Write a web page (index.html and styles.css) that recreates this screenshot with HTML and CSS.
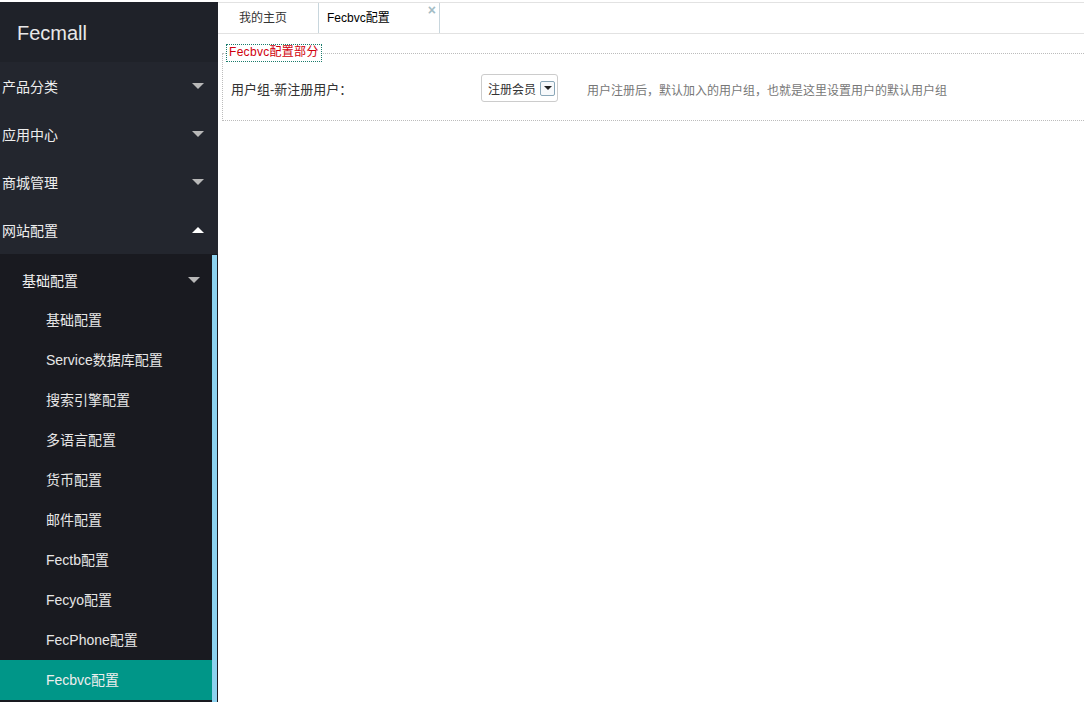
FILE: index.html
```
<!DOCTYPE html>
<html>
<head>
<meta charset="utf-8">
<link rel="stylesheet" href="styles.css">
</head>
<body>
<div class="app">
  <aside class="sidebar">
    <div class="logo">Fecmall</div>
    <div class="menu-item"><span>产品分类</span><i class="tri down"></i></div>
    <div class="menu-item"><span>应用中心</span><i class="tri down"></i></div>
    <div class="menu-item"><span>商城管理</span><i class="tri down"></i></div>
    <div class="menu-item"><span>网站配置</span><i class="tri up"></i></div>
    <div class="submenu">
      <div class="sub-head"><span>基础配置</span><i class="tri down"></i></div>
      <div class="sub-item">基础配置</div>
      <div class="sub-item">Service数据库配置</div>
      <div class="sub-item">搜索引擎配置</div>
      <div class="sub-item">多语言配置</div>
      <div class="sub-item">货币配置</div>
      <div class="sub-item">邮件配置</div>
      <div class="sub-item">Fectb配置</div>
      <div class="sub-item">Fecyo配置</div>
      <div class="sub-item">FecPhone配置</div>
      <div class="sub-item active">Fecbvc配置</div>
      <div class="scroll-strip"></div>
    </div>
  </aside>
  <main class="main">
    <div class="tabs">
      <div class="tab">我的主页</div>
      <div class="tab current">Fecbvc配置<span class="close">×</span></div>
    </div>
    <fieldset class="panel">
      <legend>Fecbvc配置部分</legend>
      <div class="row">
        <label class="label">用户组-新注册用户：</label>
        <div class="select"><span>注册会员</span><span class="drop"><i></i></span></div>
        <div class="desc">用户注册后，默认加入的用户组，也就是这里设置用户的默认用户组</div>
      </div>
    </fieldset>
  </main>
</div>
</body>
</html>
```
FILE: styles.css
```
* { box-sizing: border-box; }
html, body { margin: 0; padding: 0; background: #fff; }
body {
  font-family: "Liberation Sans", "Noto Sans CJK SC", sans-serif;
  width: 1084px;
  height: 702px;
  overflow: hidden;
  padding-top: 2px;
}
.app { display: flex; height: 700px; }
.sidebar {
  width: 218px;
  flex: none;
  background: #23262e;
  color: #e6e6e6;
  display: flex;
  flex-direction: column;
}
.logo {
  height: 60px;
  background: #1f2229;
  font-size: 20px;
  line-height: 62px;
  padding-left: 17px;
  color: #e8e8e8;
}
.menu-item {
  height: 48px;
  display: flex;
  align-items: center;
  justify-content: space-between;
  padding: 0 14px 0 2px;
  font-size: 14px;
  color: #eee;
}
.tri {
  display: block;
  width: 0;
  height: 0;
  border-left: 6px solid transparent;
  border-right: 6px solid transparent;
}
.tri.down { border-top: 6px solid #b8b8b8; }
.tri.up { border-bottom: 6px solid #fff; }
.submenu {
  flex: 1;
  background: #191a20;
  padding-top: 6px;
  position: relative;
}
.sub-head {
  height: 40px;
  display: flex;
  align-items: center;
  justify-content: space-between;
  padding: 0 18px 0 22px;
  font-size: 14px;
  color: #eee;
}
.sub-item {
  height: 40px;
  line-height: 40px;
  padding-left: 46px;
  font-size: 14px;
  color: #e6e6e6;
  margin-right: 6px;
}
.sub-item.active { background: #009688; color: #eee; }
.scroll-strip {
  position: absolute;
  right: 1px;
  top: 1px;
  bottom: 0;
  width: 5px;
  background: #8dd2ef;
}
.main {
  flex: 1;
  overflow: hidden;
  min-width: 0;
}
.tabs {
  height: 32px;
  border-top: 1px solid #e2e2e2;
  border-bottom: 1px solid #e2e2e2;
  display: flex;
}
.tab {
  font-size: 12px;
  color: #333;
  height: 30px;
  line-height: 30px;
  border-right: 1px solid #c8d6dd;
  position: relative;
}
.tab:first-child { width: 101px; padding-left: 21px; }
.tab.current { width: 121px; padding-left: 8px; color: #000; }
.close {
  position: absolute;
  right: 3px;
  top: -8px;
  font-size: 14px;
  font-weight: bold;
  color: #a3bcc5;
}
.panel {
  margin: 10px -20px 0 4px;
  border: 1px dotted #bcbcbc;
  padding: 3px 8px 18px 8px;
  min-width: 0;
}
.panel legend {
  font-size: 12px;
  color: #d0000d;
  border: 1px dotted #1a7c6c;
  padding: 1px 2px 2px 2px;
  margin-left: -5px;
  line-height: 13px;
  letter-spacing: 0.3px;
}
.row {
  display: flex;
  align-items: center;
  height: 28px;
  margin-top: 9px;
}
.label {
  width: 250px;
  font-size: 13px;
  color: #333;
}
.select {
  width: 77px;
  height: 28px;
  border: 1px solid #ccc;
  border-radius: 3px;
  display: flex;
  align-items: center;
  padding-left: 6px;
  font-size: 12px;
  color: #333;
}
.drop {
  margin-left: 4px;
  width: 15px;
  height: 15px;
  border: 1px solid #8aa7b8;
  border-radius: 2px;
  display: flex;
  align-items: center;
  justify-content: center;
  background: #f7f9fb;
}
.drop i {
  width: 0;
  height: 0;
  border-left: 4px solid transparent;
  border-right: 4px solid transparent;
  border-top: 4px solid #222;
}
.desc {
  margin-left: 29px;
  font-size: 12px;
  color: #777;
  padding-top: 3px;
}
```
